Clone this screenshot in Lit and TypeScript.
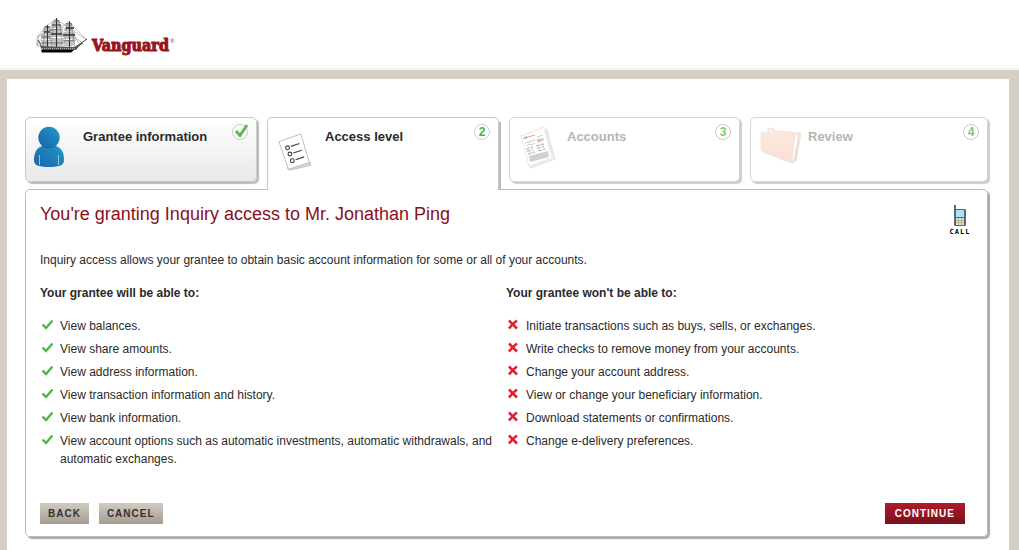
import { LitElement, html, css, svg } from "lit";
import { customElement } from "lit/decorators.js";
import { classMap } from "lit/directives/class-map.js";

const ship = html`<svg class="ship" viewBox="0 0 54 38" width="54" height="38" aria-hidden="true">
  <g fill="none" stroke="#999" stroke-width=".6">
    <path d="M21 2 52 23M21 5 47 26M34 5 52 23M34 10 45 28M21 2 10 10M34 5 22 12M12 9 2 20M21 9 12 15M1 27 8 30M4 18 2 30M34 8 40 30"/>
    <path d="M3 19q5-3 7 2l-2 9-6-3q-1-5 1-8M10 18l-7 8M12 12 5 19"/>
  </g>
  <g fill="#aaa" fill-opacity=".7">
    <path d="M17 5h8l2 6H15zM15 12h13l1 8H14zM14 21h15l-2 8H16zM9 9h6v6H7zM7 16h8v6H6zM6 23h8v6H7zM31 8h6l2 6H29zM29 15h11v7H28zM29 23h11l-2 6H30z"/>
  </g>
  <g fill="none" stroke="#333">
    <path stroke-width="1.1" d="M21.500 1v31M34.500 4v28M12.500 8v24"/>
    <path stroke-width=".9" d="M19 4h5M17 8h9M31 7h6M10 10h5"/>
    <path stroke-width="1.3" d="M16 17h11M31 11h8M28 18h12M9 15h6"/>
    <path stroke-width=".5" d="M15 13l12-1M16 26h13M28 24l13-1M6 20h10M5 26h11"/>
    <path stroke-width=".5" stroke-dasharray="1 1" d="M19 3 16 29M24 3l4 27M32 6l-3 24M36 6l4 24M10 10 8 29M15 11v18"/>
    <path stroke-width=".9" d="M39 31 52 22M40 31l8-5M3 23l4 7"/>
  </g>
  <path fill="#555" d="M5 29 40 30l6-3-5 6H7z"/>
  <path stroke="#ccc" stroke-width=".8" stroke-dasharray="1 1" d="M7 31.500h33"/>
  <path fill="#000" d="M6 33h33l-3 2.500H7z"/>
</svg>`;

const person = svg`<defs><linearGradient id="p" x1="0" y1="1" x2="1" y2="0"><stop stop-color="#1b5fab"/><stop offset="1" stop-color="#1f9cc6"/></linearGradient></defs>
  <path fill="url(#p)" d="M0 34C0 25 4 21 9 20h12c6 1 9 6 9 14 0 5-4 7-15 7S0 39 0 34z"/>
  <circle cx="15" cy="11.500" r="10.700" fill="url(#p)"/>
  <path d="M7 19.500q8 5 16 0" fill="none" stroke="#185c94" stroke-width="1" opacity=".6"/>
  <path d="M5.500 29v10M24.500 29v10" stroke="#8fc3e6" stroke-width="1"/>`;

const checklist = svg`<path d="M10 37l24-6v3l-22 5z" fill="#ddd" stroke="#aaa" stroke-width=".7"/>
  <path d="M1 9 24 1l9 30-22 7z" fill="#fff" stroke="#bbb"/>
  <g fill="none" stroke="#444" stroke-width="1.200"><circle cx="10" cy="15.500" r="2"/><circle cx="12.500" cy="22" r="2"/><circle cx="15" cy="29" r="2"/>
  <path d="M13.500 14l9-3M16 21l9-3M18.500 28l9-3"/></g>`;

const statement = svg`<path d="M11 41 36 33 27 4l2-1 8 30-24 9z" fill="#eee" stroke="#ddd" stroke-width=".7"/>
  <path d="M3 10Q13 6 26 1l8 31-23 8z" fill="#fff" stroke="#e8e8e8"/>
  <path d="M5 12l4-2 1 2-4 1z" fill="#aaa"/><path d="M10 11l7-2" stroke="#e7a5ad" stroke-width="1.300"/>
  <path d="M7 17l10-3M8 20l3-2 3 1 3-2" fill="none" stroke="#ccc"/>
  <path d="M19 11l6-2" stroke="#ccc"/><circle cx="21" cy="14.500" r="2" fill="#f3b0ae"/><circle cx="24" cy="13.500" r="1.700" fill="#b7dcb5"/>
  <path d="M8 23l7-2M9 25.500l6-2M10 28l7-2M18 20l8-2M19 22.500l7-2M20 25l7-2" stroke="#c4c4c4" stroke-width="1.400" stroke-dasharray="4 1"/>
  <path d="M11 30l19-5 1 6-19 5z" fill="#d0d0d0"/>`;

const folder = svg`<defs><linearGradient id="f" x1="0" y1="0" x2="0" y2="1"><stop stop-color="#fce9dc"/><stop offset="1" stop-color="#f8e0d3"/></linearGradient></defs>
  <path d="M9 6V2l6 1v2l27 2-5 28-4 1z" fill="#fbeee4" stroke="#ecd9cc" stroke-width=".8"/>
  <path d="M36 9l4-1-5 26-3 1z" fill="#fff" stroke="#ddd" stroke-width=".7"/>
  <path d="M2 6 36 8l-3 28L2 24z" fill="url(#f)" stroke="#f5e3d8" stroke-width=".6"/>
  <path d="M3 25.500l30 11.500 3-2 4-27" fill="none" stroke="#ddd4ce" stroke-width=".8"/>`;

const greenTick = html`<svg class="mark" viewBox="0 0 12 12" width="12" height="12" aria-hidden="true"><path d="M1.500 5.500 5 9 11.500 1.500" fill="none" stroke="#4db848" stroke-width="2.400"/></svg>`;
const redCross = html`<svg class="mark" viewBox="0 0 12 12" width="12" height="12" aria-hidden="true"><path d="M2 1.500C4.500 4 6.500 6 10 9.500M10 1.500C6.500 4 4.500 6 2 9.500" fill="none" stroke="#e21f30" stroke-width="2.600"/></svg>`;

const steps = [
  { title: "Grantee information", art: person, state: "done" },
  { title: "Access level", art: checklist, state: "active" },
  { title: "Accounts", art: statement, state: "pending" },
  { title: "Review", art: folder, state: "pending" },
];

const allowed = [
  "View balances.",
  "View share amounts.",
  "View address information.",
  "View transaction information and history.",
  "View bank information.",
  "View account options such as automatic investments, automatic withdrawals, and automatic exchanges.",
];

const denied = [
  "Initiate transactions such as buys, sells, or exchanges.",
  "Write checks to remove money from your accounts.",
  "Change your account address.",
  "View or change your beneficiary information.",
  "Download statements or confirmations.",
  "Change e-delivery preferences.",
];

@customElement("app-root")
export class AppRoot extends LitElement {
  static styles = css`
    :host { display: flex; flex-direction: column; min-height: 100vh; background: #fff; color: #2a2a2a; font: 12px/18px "Liberation Sans", Arial, sans-serif; }
    * { box-sizing: border-box; }
    h1, h2, p, ul, ol { margin: 0; padding: 0; }
    ul, ol { list-style: none; }
    svg { display: block; flex: none; }
    header { display: flex; height: 70px; padding: 17px 0 0 35px; border-bottom: 2px solid #f3f4f5; }
    .logo { display: flex; align-items: flex-start; gap: 3px; color: #96151d; text-decoration: none; }
    .word { padding-top: 18px; font: bold 16px/22px "DejaVu Serif Condensed", "DejaVu Serif", serif; font-stretch: condensed; -webkit-text-stroke: 1px #96151d; }
    .reg { padding-top: 20px; margin-left: -2px; font-size: 6px; line-height: 8px; }
    .frame { flex: 1; display: flex; background: #d3cfc4; padding: 9px 10px 0 7px; }
    main { flex: 1; min-width: 0; background: #fff; padding: 38px 21px 12px 18px; }
    .steps { display: grid; grid-template-columns: 232fr 232fr 231fr 238fr; gap: 10px; }
    .step { position: relative; display: flex; height: 65px; padding: 8px; border: 1px solid #c8c8c8; border-radius: 5px; background: #fff; box-shadow: 2px 2px 1px #bbb; }
    .step.done { background: linear-gradient(#fff, #e9e9e9); }
    .step.active { z-index: 1; height: 73px; border-bottom: 0; border-radius: 5px 5px 0 0; box-shadow: none; }
    .step.active::after { content: ""; position: absolute; right: -3px; top: 4px; bottom: 1px; width: 2px; background: #bbb; }
    .step.pending { border-color: #d6d6d6; box-shadow: 2px 2px 1px #ccc; }
    .art { width: 42px; height: 44px; }
    .active .art { margin: 6px 0 0 2px; width: 40px; }
    .name { flex: 1; padding: 2px 0 0 7px; font-size: 13px; font-weight: bold; }
    .pending .name { color: #b5b5b5; }
    .badge { display: grid; place-items: center; width: 16px; height: 16px; margin-top: -2px; border: 1px solid #ccc; border-radius: 50%; color: #3dba3d; font-size: 12px; line-height: 14px; font-weight: bold; }
    .pending .badge { color: #73cf73; }
    .badge svg { overflow: visible; }
    .panel { margin-top: -1px; border: 1px solid #bbb; border-radius: 5px; box-shadow: 2px 2px 1px #aaa; padding: 14px 15px 12px 14px; }
    .top { display: flex; justify-content: space-between; height: 47px; }
    h1 { color: #8b0f1b; font-size: 18px; line-height: 20px; font-weight: normal; }
    .call { display: flex; flex-direction: column; align-items: center; gap: 1px; width: 24px; color: #000; text-decoration: none; font: bold 7px/8px "DejaVu Sans Mono", monospace; letter-spacing: 1px; }
    .columns { display: grid; grid-template-columns: 1fr 1fr; margin-top: 15px; }
    h2 { font-size: 12px; line-height: 18px; margin-bottom: 15px; }
    .list { display: grid; gap: 5px; }
    .list li { display: flex; gap: 7px; }
    .mark { margin: 2px 0 0 1px; }
    .actions { display: flex; gap: 10px; margin-top: 35px; padding-right: 7px; }
    button { height: 21px; padding: 0 8px; border: 0; border-radius: 0; background: linear-gradient(#d0ccc1, #a69b90); color: #333; font: bold 10px/21px "Liberation Sans", Arial, sans-serif; letter-spacing: 1px; }
    .go { margin-left: auto; padding: 0 10px; background: linear-gradient(#b01a29, #7a101c); color: #fff; }
  `;

  render() {
    return html`
      <header><a class="logo" href="#">${ship}<span class="word">Vanguard</span><span class="reg">®</span></a></header>
      <div class="frame"><main>
        <ol class="steps">${steps.map((s, i) => html`
          <li class=${classMap({ step: true, [s.state]: true })}>
            <svg class="art" viewBox="0 0 42 44" aria-hidden="true">${s.art}</svg>
            <span class="name">${s.title}</span>
            <span class="badge">${s.state === "done"
              ? html`<svg viewBox="0 0 16 16" width="16" height="16" aria-label="Done"><path d="M3 6 7 10.500 14 0" fill="none" stroke="#58b947" stroke-width="2.800"/></svg>`
              : i + 1}</span>
          </li>`)}</ol>
        <section class="panel">
          <div class="top">
            <h1>You're granting Inquiry access to Mr. Jonathan Ping</h1>
            <a class="call" href="#"><svg viewBox="0 0 12 23" width="12" height="23" aria-hidden="true">
              <path d="M0 1h2v4h9l1 1v15l-1 1H1l-1-1z" fill="#60656a"/><path d="M2 6h8v7H2z" fill="#aee0f7"/><path d="M2 14h8v7H2z" fill="#dfe5d3"/><path d="M4.500 14v7M7.500 14v7M2 16.500h8M2 18.500h8" stroke="#a3aa98" stroke-width=".8"/></svg>CALL</a>
          </div>
          <p>Inquiry access allows your grantee to obtain basic account information for some or all of your accounts.</p>
          <div class="columns">
            <div><h2>Your grantee will be able to:</h2><ul class="list">${allowed.map((t) => html`<li>${greenTick}<span>${t}</span></li>`)}</ul></div>
            <div><h2>Your grantee won't be able to:</h2><ul class="list">${denied.map((t) => html`<li>${redCross}<span>${t}</span></li>`)}</ul></div>
          </div>
          <div class="actions"><button type="button">BACK</button><button type="button">CANCEL</button><button type="button" class="go">CONTINUE</button></div>
        </section>
      </main></div>`;
  }
}
